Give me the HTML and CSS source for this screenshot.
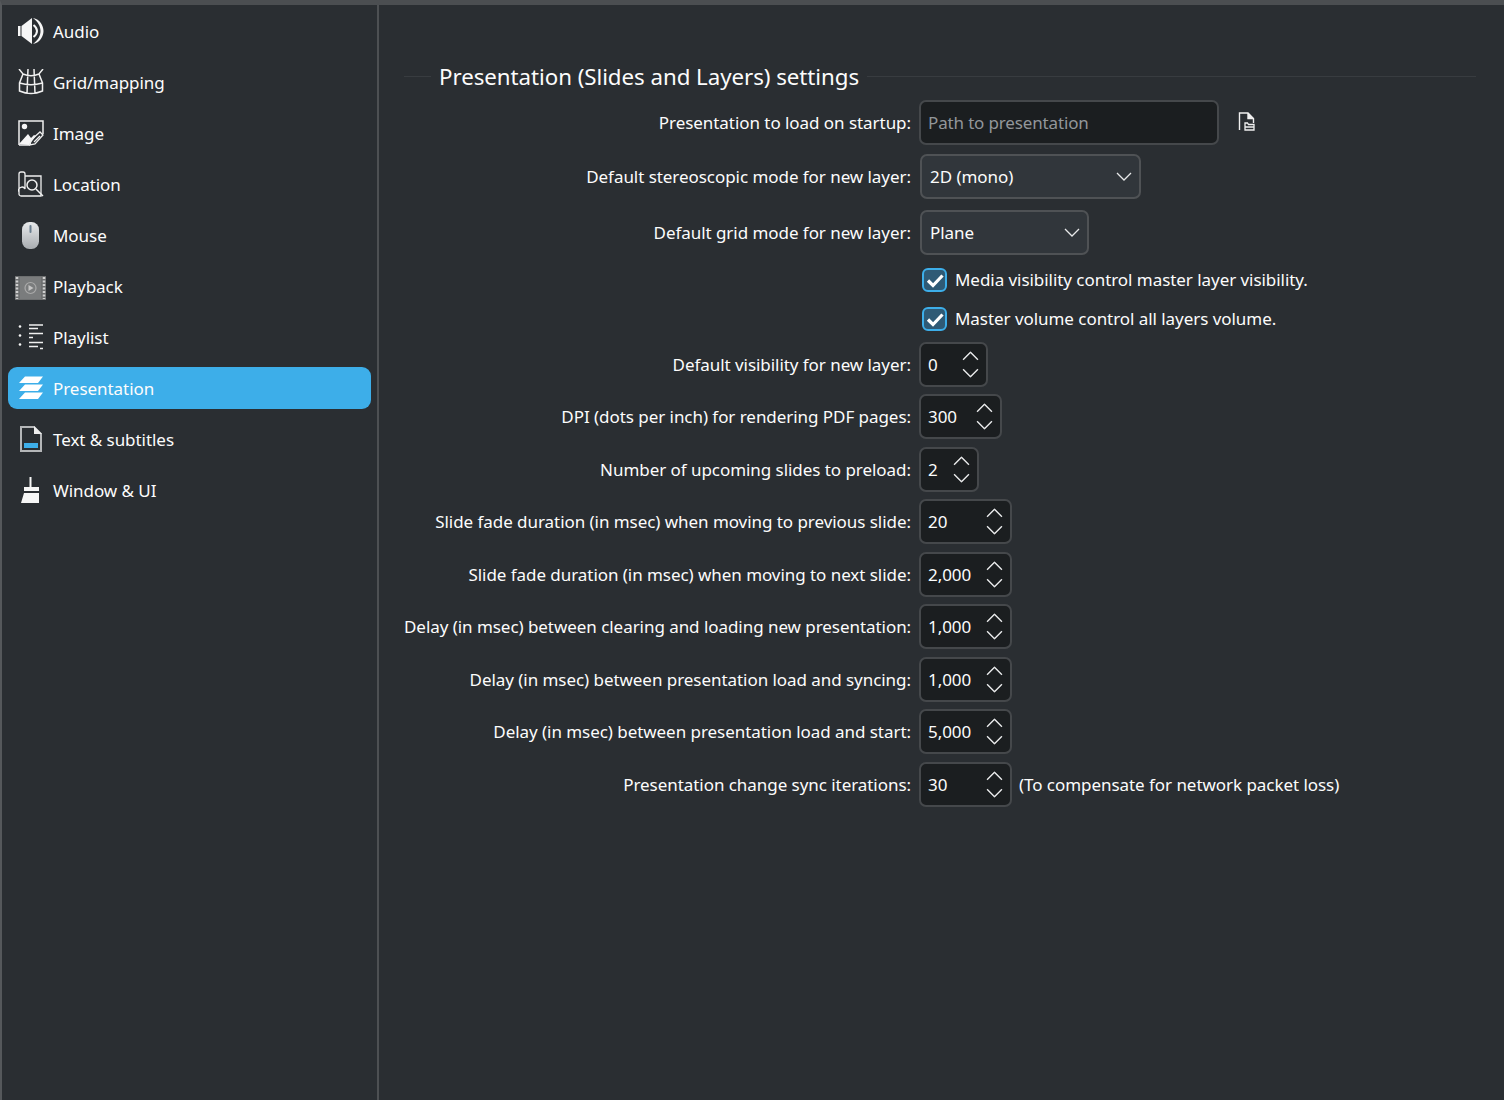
FILE: index.html
```html
<!DOCTYPE html>
<html lang="en">
<head>
<meta charset="utf-8">
<title>Settings</title>
<link rel="stylesheet" href="styles.css">
</head>
<body>
<svg class="defs" width="0" height="0" aria-hidden="true">
  <symbol id="up" viewBox="0 0 16 9"><path d="M1 8 8 1l7 7" fill="none" stroke="#e8e9ea" stroke-width="1.3"/></symbol>
  <symbol id="down" viewBox="0 0 16 9"><path d="M1 1l7 7 7-7" fill="none" stroke="#e8e9ea" stroke-width="1.3"/></symbol>
  <symbol id="check" viewBox="0 0 24 24"><path d="M5 12.5 10 17.500 19.500 7.500" fill="none" stroke="#fff" stroke-width="3.200"/></symbol>
</svg>
<div class="app">
  <nav class="sidebar">
    <a class="item"><svg class="icon" viewBox="0 0 26 26"><path d="M0 8h2.500v10H0zM3.500 8 14 0v26L3.500 18z" fill="#f6f6f6"/><path d="M15 0c7 1 10.500 8 10.500 13S22 25 15 26c5-4 7.500-8 7.500-13S20 4 15 0z" fill="#f6f6f6"/><path d="M15.500 7c2.500 2 3.500 4 3.500 6s-1 4-3.500 6" fill="none" stroke="#f6f6f6" stroke-width="2"/></svg><span>Audio</span></a>
    <a class="item"><svg class="icon" viewBox="0 0 26 26"><path d="M1 0l4 5C11 7.500 15 7.500 21 5l4-5M5 5 1.500 14v8c7 3 16 3 23 0v-8L21 5M1.500 14c7 2 16 2 23 0M10 0 9 24.500M16 0l1 24.500" fill="none" stroke="#f0f0f0" stroke-width="1.500"/></svg><span>Grid/mapping</span></a>
    <a class="item"><svg class="icon" viewBox="0 0 26 26"><path d="M1 25V1h24v13M1 25h11" fill="none" stroke="#f0f0f0" stroke-width="1.500"/><circle cx="6.500" cy="6.500" r="2.700" fill="#f6f6f6"/><path d="M1 24l9-10 3 4 3-3 2 1-7 9z" fill="#f6f6f6"/><path d="M12 25l1-5 9-8 3 3-8 9zM16 22l6-6" fill="none" stroke="#f0f0f0" stroke-width="1.300"/></svg><span>Image</span></a>
    <a class="item"><svg class="icon" viewBox="0 0 26 26"><path d="M7 5h16v20H3a2 2 0 0 1-2-2V3a2 2 0 0 1 2-2h2a2 2 0 0 1 2 2v15a2 2 0 0 0-6 3" fill="none" stroke="#f0f0f0" stroke-width="1.300"/><circle cx="14" cy="14" r="5" fill="#2a2e32" stroke="#f0f0f0" stroke-width="1.500"/><path d="M18 18l7 7" stroke="#f0f0f0" stroke-width="1.500"/></svg><span>Location</span></a>
    <a class="item"><svg class="icon icon-mouse" viewBox="0 0 17 27"><defs><linearGradient id="mouse" x1="0" y1="0" x2="0" y2="1"><stop offset="0" stop-color="#e8eaec"/><stop offset="1" stop-color="#a8acb0"/></linearGradient></defs><rect width="17" height="27" rx="7.500" fill="url(#mouse)"/><rect x="7.500" y="3" width="2" height="8" rx="1" fill="#6b7f90"/></svg><span>Mouse</span></a>
    <a class="item"><svg class="icon icon-wide" viewBox="0 0 31 24"><rect width="31" height="24" fill="#6d6f70"/><path d="M2 1v22M29 1v22" stroke="#cfcfcf" stroke-width="2.500" stroke-dasharray="2 1.500"/><rect x="5" y="1" width="21" height="22" fill="#7a7c7d"/><circle cx="15.500" cy="12" r="5.500" fill="none" stroke="#aaa" stroke-width="1.200"/><path d="M13.500 9l5 3-5 3z" fill="#c4c4c4"/></svg><span>Playback</span></a>
    <a class="item"><svg class="icon" viewBox="0 0 26 26"><circle cx="2" cy="2.500" r="1.300" fill="#f6f6f6"/><circle cx="2" cy="11.500" r="1.300" fill="#f6f6f6"/><circle cx="2" cy="20.500" r="1.300" fill="#f6f6f6"/><path d="M11 1h14M11 4.500h9M11 9.500h14M11 13.500h4M11 18.500h14M11 22.500h9M22 24.500h3" stroke="#f0f0f0" stroke-width="1.400"/></svg><span>Playlist</span></a>
    <a class="item selected"><svg class="icon" viewBox="0 0 26 26"><path d="M7 1.500h18l-5 6.500H1zM7 9.500h18L20 16H1zM7 17.500h18L20 24H1z" fill="#fff"/></svg><span>Presentation</span></a>
    <a class="item"><svg class="icon" viewBox="0 0 26 26"><path d="M3 1h13l7 7v17H3z" fill="none" stroke="#b4b6b8" stroke-width="2"/><path d="M16 0v8h8z" fill="#eee"/><rect x="6" y="17" width="14" height="5" fill="#3daee9"/></svg><span>Text &amp; subtitles</span></a>
    <a class="item"><svg class="icon" viewBox="0 0 26 26"><path d="M11.500 0h2v10h-2zM6 10h15v4H6zM6 16h15v10H3z" fill="#f6f6f6"/></svg><span>Window &amp; UI</span></a>
  </nav>
  <main class="main">
    <div class="group-title"><span>Presentation (Slides and Layers) settings</span></div>
    <div class="form">
      <div class="row"><label class="label">Presentation to load on startup:</label><div class="field path">Path to presentation</div><svg class="file-icon" viewBox="0 0 17 19"><path d="M1.500 18V1H10l5.500 5.500V11M10 1v5.500h5.500" fill="none" stroke="#f0f0f0" stroke-width="1.400"/><path d="M10 1v5.500h5.500z" fill="#f0f0f0"/><path d="M7 18v-7h2.500l1 1.500H16V18zM7 15h9" fill="none" stroke="#f0f0f0" stroke-width="1.300"/></svg></div>
      <div class="row"><label class="label">Default stereoscopic mode for new layer:</label><div class="combo combo-mono">2D (mono)<svg class="caret" viewBox="0 0 16 9"><use href="#down"/></svg></div></div>
      <div class="row row-plane"><label class="label">Default grid mode for new layer:</label><div class="combo combo-plane">Plane<svg class="caret" viewBox="0 0 16 9"><use href="#down"/></svg></div></div>
      <div class="check-row check-first"><span class="box"><svg viewBox="0 0 24 24"><use href="#check"/></svg></span>Media visibility control master layer visibility.</div>
      <div class="check-row"><span class="box"><svg viewBox="0 0 24 24"><use href="#check"/></svg></span>Master volume control all layers volume.</div>
      <div class="spins">
        <div class="row"><label class="label">Default visibility for new layer:</label><div class="spin w68">0<span class="arrows"><svg viewBox="0 0 16 9"><use href="#up"/></svg><svg viewBox="0 0 16 9"><use href="#down"/></svg></span></div></div>
        <div class="row"><label class="label">DPI (dots per inch) for rendering PDF pages:</label><div class="spin w82">300<span class="arrows"><svg viewBox="0 0 16 9"><use href="#up"/></svg><svg viewBox="0 0 16 9"><use href="#down"/></svg></span></div></div>
        <div class="row"><label class="label">Number of upcoming slides to preload:</label><div class="spin w59">2<span class="arrows"><svg viewBox="0 0 16 9"><use href="#up"/></svg><svg viewBox="0 0 16 9"><use href="#down"/></svg></span></div></div>
        <div class="row"><label class="label">Slide fade duration (in msec) when moving to previous slide:</label><div class="spin w92">20<span class="arrows"><svg viewBox="0 0 16 9"><use href="#up"/></svg><svg viewBox="0 0 16 9"><use href="#down"/></svg></span></div></div>
        <div class="row"><label class="label">Slide fade duration (in msec) when moving to next slide:</label><div class="spin w92">2,000<span class="arrows"><svg viewBox="0 0 16 9"><use href="#up"/></svg><svg viewBox="0 0 16 9"><use href="#down"/></svg></span></div></div>
        <div class="row"><label class="label">Delay (in msec) between clearing and loading new presentation:</label><div class="spin w92">1,000<span class="arrows"><svg viewBox="0 0 16 9"><use href="#up"/></svg><svg viewBox="0 0 16 9"><use href="#down"/></svg></span></div></div>
        <div class="row"><label class="label">Delay (in msec) between presentation load and syncing:</label><div class="spin w92">1,000<span class="arrows"><svg viewBox="0 0 16 9"><use href="#up"/></svg><svg viewBox="0 0 16 9"><use href="#down"/></svg></span></div></div>
        <div class="row"><label class="label">Delay (in msec) between presentation load and start:</label><div class="spin w92">5,000<span class="arrows"><svg viewBox="0 0 16 9"><use href="#up"/></svg><svg viewBox="0 0 16 9"><use href="#down"/></svg></span></div></div>
        <div class="row"><label class="label">Presentation change sync iterations:</label><div class="spin w92">30<span class="arrows"><svg viewBox="0 0 16 9"><use href="#up"/></svg><svg viewBox="0 0 16 9"><use href="#down"/></svg></span></div><span class="note">(To compensate for network packet loss)</span></div>
      </div>
    </div>
  </main>
</div>
</body>
</html>
```

FILE: styles.css
```css
* { box-sizing: border-box; }
html, body { margin: 0; height: 100%; }
body {
  background: #2a2e32;
  color: #fcfcfc;
  font-family: "Noto Sans", "Open Sans", sans-serif;
  font-size: 17px;
  letter-spacing: -0.05px;
  overflow: hidden;
}
.defs { position: absolute; }
.app {
  height: 1100px;
  display: flex;
  background: #2a2e32;
  border-top: 5px solid #4b4e51;
  border-left: 2px solid #55585b;
}
.sidebar {
  width: 377px;
  flex: none;
  border-right: 2px solid #4d5053;
  padding: 5px 6px 0 6px;
  display: flex;
  flex-direction: column;
  gap: 9px;
}
.item {
  height: 42px;
  display: flex;
  align-items: center;
  gap: 9px;
  padding-left: 10px;
  border-radius: 9px;
}
.item.selected { background: #3daee9; }
.icon { width: 26px; height: 26px; flex: none; }
.icon-mouse { width: 17px; height: 27px; margin: 0 5px 0 4px; }
.icon-wide { width: 31px; height: 24px; margin: 3px -2px 0 -3px; }
.main { flex: 1; padding: 54px 28px 0 25px; min-width: 0; }
.group-title {
  display: flex;
  align-items: center;
  height: 34px;
  font-size: 22.3px;
  margin-bottom: 7px;
}
.group-title::before { content: ""; width: 27px; height: 1px; background: #383c40; margin-right: 8px; }
.group-title::after { content: ""; flex: 1; height: 1px; background: #383c40; margin-left: 8px; }
.form { display: flex; flex-direction: column; }
.row { display: flex; align-items: center; height: 45px; }
.form > .row + .row { margin-top: 9px; }
.form > .row-plane { margin-top: 11px !important; }
.label { width: 507px; flex: none; text-align: right; margin-right: 8px; white-space: nowrap; }
.field, .combo, .spin {
  height: 45px;
  border: 2px solid #45484b;
  border-radius: 7px;
  display: flex;
  align-items: center;
  white-space: nowrap;
}
.field { width: 300px; background: #1b1e20; padding-left: 7px; color: #92969a; letter-spacing: -0.15px; }
.file-icon { width: 17px; height: 19px; margin-left: 19px; margin-top: -2px; }
.combo { background: #31363b; margin-left: 1px; padding-left: 8px; justify-content: space-between; padding-right: 7px; border-color: #4f5255; }
.combo-mono { width: 221px; }
.combo-plane { width: 169px; }
.caret { width: 16px; height: 9px; }
.check-row { display: flex; align-items: center; height: 39px; margin-left: 518px; }
.check-first { margin-top: 5px; }
.box {
  width: 25px; height: 24px; border: 2px solid #3daee9; border-radius: 6px;
  background: #2f5a75; margin-right: 8px; display: flex; align-items: center; justify-content: center;
}
.box svg { width: 24px; height: 24px; flex: none; }
.spins { display: flex; flex-direction: column; gap: 7.5px; margin-top: 3.5px; }
.spin { background: #1b1e20; padding-left: 7px; justify-content: space-between; padding-right: 7px; }
.arrows { display: flex; flex-direction: column; gap: 7px; }
.arrows svg { display: block; width: 17px; height: 10px; }
.w68 { width: 69px; }
.w82 { width: 83px; }
.w59 { width: 60px; }
.w92 { width: 93px; }
.note { margin-left: 7px; white-space: nowrap; }
```
